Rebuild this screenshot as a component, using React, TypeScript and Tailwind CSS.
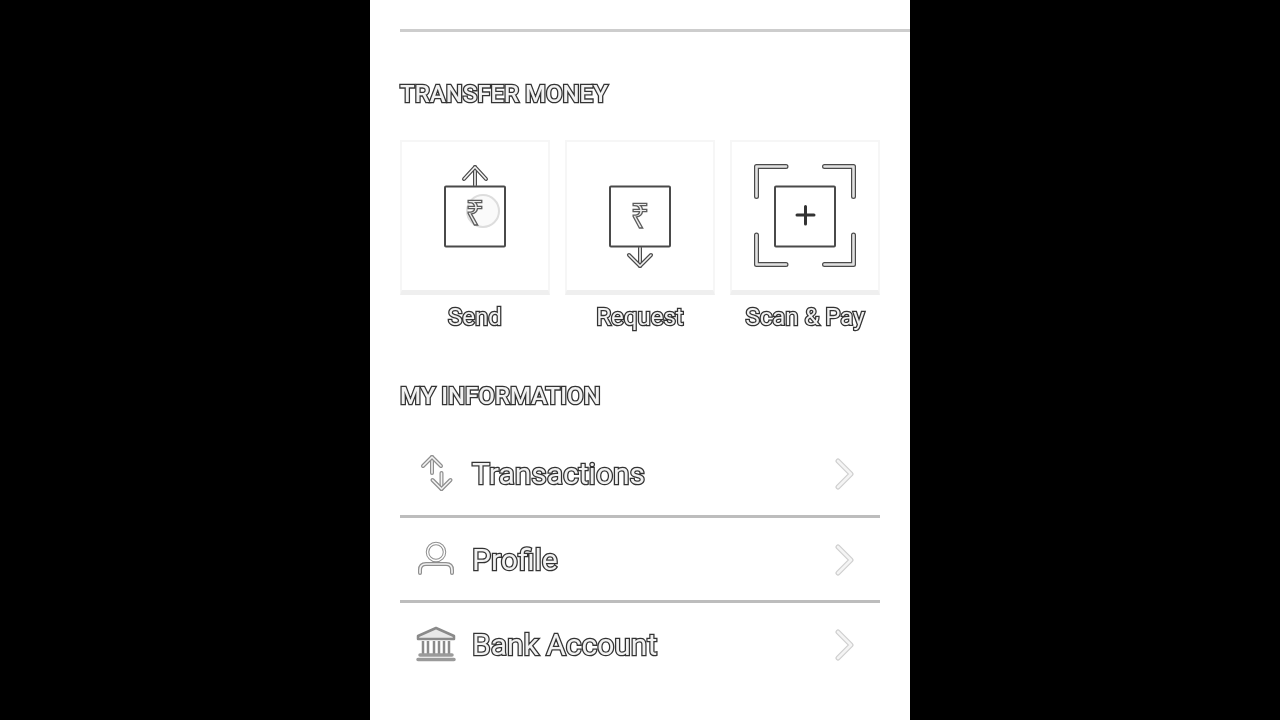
const outlined = "text-[#f2f2f2] [font-family:Roboto,sans-serif] [paint-order:stroke_fill] [-webkit-text-stroke:2.600px_#333333]";

// every line in the reference has a dark edge and a pale core
function Line({ d, edge = "#4a4a4a", core = "#f4f4f4", w = 4 }: { d: string; edge?: string; core?: string; w?: number }) {
  return (
    <>
      <path d={d} fill="none" stroke={edge} strokeWidth={w} strokeLinecap="round" strokeLinejoin="round" />
      <path d={d} fill="none" stroke={core} strokeWidth={w - 2.4} strokeLinecap="round" strokeLinejoin="round" />
    </>
  );
}

function Rupee({ x, y }: { x: number; y: number }) {
  return (
    <text
      x={x}
      y={y}
      textAnchor="middle"
      fontSize="33"
      fontFamily="'Noto Sans', 'DejaVu Sans', sans-serif"
      fill="#eeeeee"
      stroke="#5c5c5c"
      strokeWidth="1.3"
    >
      ₹
    </text>
  );
}

function SendIcon() {
  return (
    <svg width="150" height="150" viewBox="0 0 150 150">
      <circle cx="83" cy="71" r="16" fill="#fafafa" stroke="#dddddd" strokeWidth="2" />
      <rect x="45" y="46.500" width="60" height="60" rx="1" fill="none" stroke="#4a4a4a" strokeWidth="2" />
      <Line d="M75 45V27" />
      <Line d="M64 39L75 27L86 39" />
      <Rupee x={75} y={85} />
    </svg>
  );
}

function RequestIcon() {
  return (
    <svg width="150" height="150" viewBox="0 0 150 150">
      <rect x="45" y="46.500" width="60" height="60" rx="1" fill="none" stroke="#4a4a4a" strokeWidth="2" />
      <Line d="M75 108V126" />
      <Line d="M64 115L75 126L86 115" />
      <Rupee x={75} y={88} />
    </svg>
  );
}

function ScanIcon() {
  return (
    <svg width="150" height="150" viewBox="0 0 150 150">
      <rect x="45" y="46.500" width="60" height="60" rx="1" fill="none" stroke="#4a4a4a" strokeWidth="2" />
      <Line d="M26.500 56.500V26.500H56" w={5} core="#e2e2e2" />
      <Line d="M94.500 26.500H123.500V56.500" w={5} core="#e2e2e2" />
      <Line d="M26.500 95V124.500H56" w={5} core="#e2e2e2" />
      <Line d="M94.500 124.500H123.500V95" w={5} core="#e2e2e2" />
      <path d="M67 75H84M75.500 66.500V84" stroke="#333333" strokeWidth="3" strokeLinecap="round" />
    </svg>
  );
}

function TransactionsIcon() {
  return (
    <svg width="40" height="40" viewBox="0 0 40 40">
      <Line d="M16 19V3" edge="#8f8f8f" />
      <Line d="M7 12L16 3L25 12" edge="#8f8f8f" />
      <Line d="M25.500 19V35" edge="#8f8f8f" />
      <Line d="M16.500 26L25.500 35L34.500 26" edge="#8f8f8f" />
    </svg>
  );
}

function ProfileIcon() {
  return (
    <svg width="40" height="40" viewBox="0 0 40 40">
      <circle cx="20" cy="12" r="8.500" fill="none" stroke="#8f8f8f" strokeWidth="3.500" />
      <circle cx="20" cy="12" r="8.500" fill="none" stroke="#ffffff" strokeWidth="1.500" />
      <Line d="M4 33V30Q4 24 10 24H30Q36 24 36 30V33" edge="#8f8f8f" />
    </svg>
  );
}

function BankIcon() {
  return (
    <svg width="40" height="40" viewBox="0 0 40 40">
      <path d="M2 11L20 3L38 11V14H2Z" fill="#e8e8e8" stroke="#8a8a8a" strokeWidth="2.500" strokeLinejoin="round" />
      <path d="M7 16V29M12 16V29M18 16V29M23 16V29M28 16V29M33 16V29" stroke="#8a8a8a" strokeWidth="2.500" />
      <path d="M4 30H36M2 34.500H38" stroke="#9a9a9a" strokeWidth="3.500" strokeLinecap="round" />
    </svg>
  );
}

function Chevron() {
  return (
    <svg width="24" height="32" viewBox="0 0 24 32" className="mr-[23px]">
      <Line d="M5 3L18 16L5 29" edge="#cfcfcf" w={5} />
    </svg>
  );
}

const actions = [
  { label: "Send", icon: <SendIcon /> },
  { label: "Request", icon: <RequestIcon /> },
  { label: "Scan & Pay", icon: <ScanIcon /> },
];

const rows = [
  { label: "Transactions", icon: <TransactionsIcon />, rule: "border-b-[#bdbdbd]" },
  { label: "Profile", icon: <ProfileIcon />, rule: "border-b-[#bdbdbd]" },
  { label: "Bank Account", icon: <BankIcon />, rule: "border-b-transparent" },
];

export default function App() {
  return (
    <div className="flex h-[720px] w-full justify-center overflow-hidden bg-black">
      {/* the reference is a soft video frame */}
      <main className="h-full w-[540px] bg-white pl-[30px] pt-[29px] blur-[0.4px]">
        <div className="h-[3px] bg-[#cdcdcd]" />

        <div className="pr-[30px]">
          <h2 className={`mt-[47px] h-[30px] text-[24px] font-medium leading-[30px] ${outlined}`}>TRANSFER MONEY</h2>

          <div className="mt-[31px] flex gap-[15px]">
            {actions.map((action) => (
              <div key={action.label} className="w-[150px]">
                <div className="h-[155px] border-2 border-[#f6f6f6] border-b-[5px] border-b-[#efefef] bg-white">
                  <div className="-ml-[2px] -mt-[2px]">{action.icon}</div>
                </div>
                <div className={`mt-[7px] h-[30px] text-center text-[24px] leading-[30px] ${outlined}`}>
                  {action.label}
                </div>
              </div>
            ))}
          </div>

          <h2 className={`mt-[49px] h-[30px] text-[24px] font-medium leading-[30px] ${outlined}`}>MY INFORMATION</h2>

          <div className="mt-[21px]">
            {rows.map((row) => (
              <div key={row.label} className={`flex h-[85.500px] items-center border-b-[3px] pt-[2px] ${row.rule}`}>
                <div className="ml-[16px] w-[56px]">{row.icon}</div>
                <span className={`flex-1 text-[30px] leading-none ${outlined}`}>{row.label}</span>
                <Chevron />
              </div>
            ))}
          </div>
        </div>
      </main>
    </div>
  );
}
